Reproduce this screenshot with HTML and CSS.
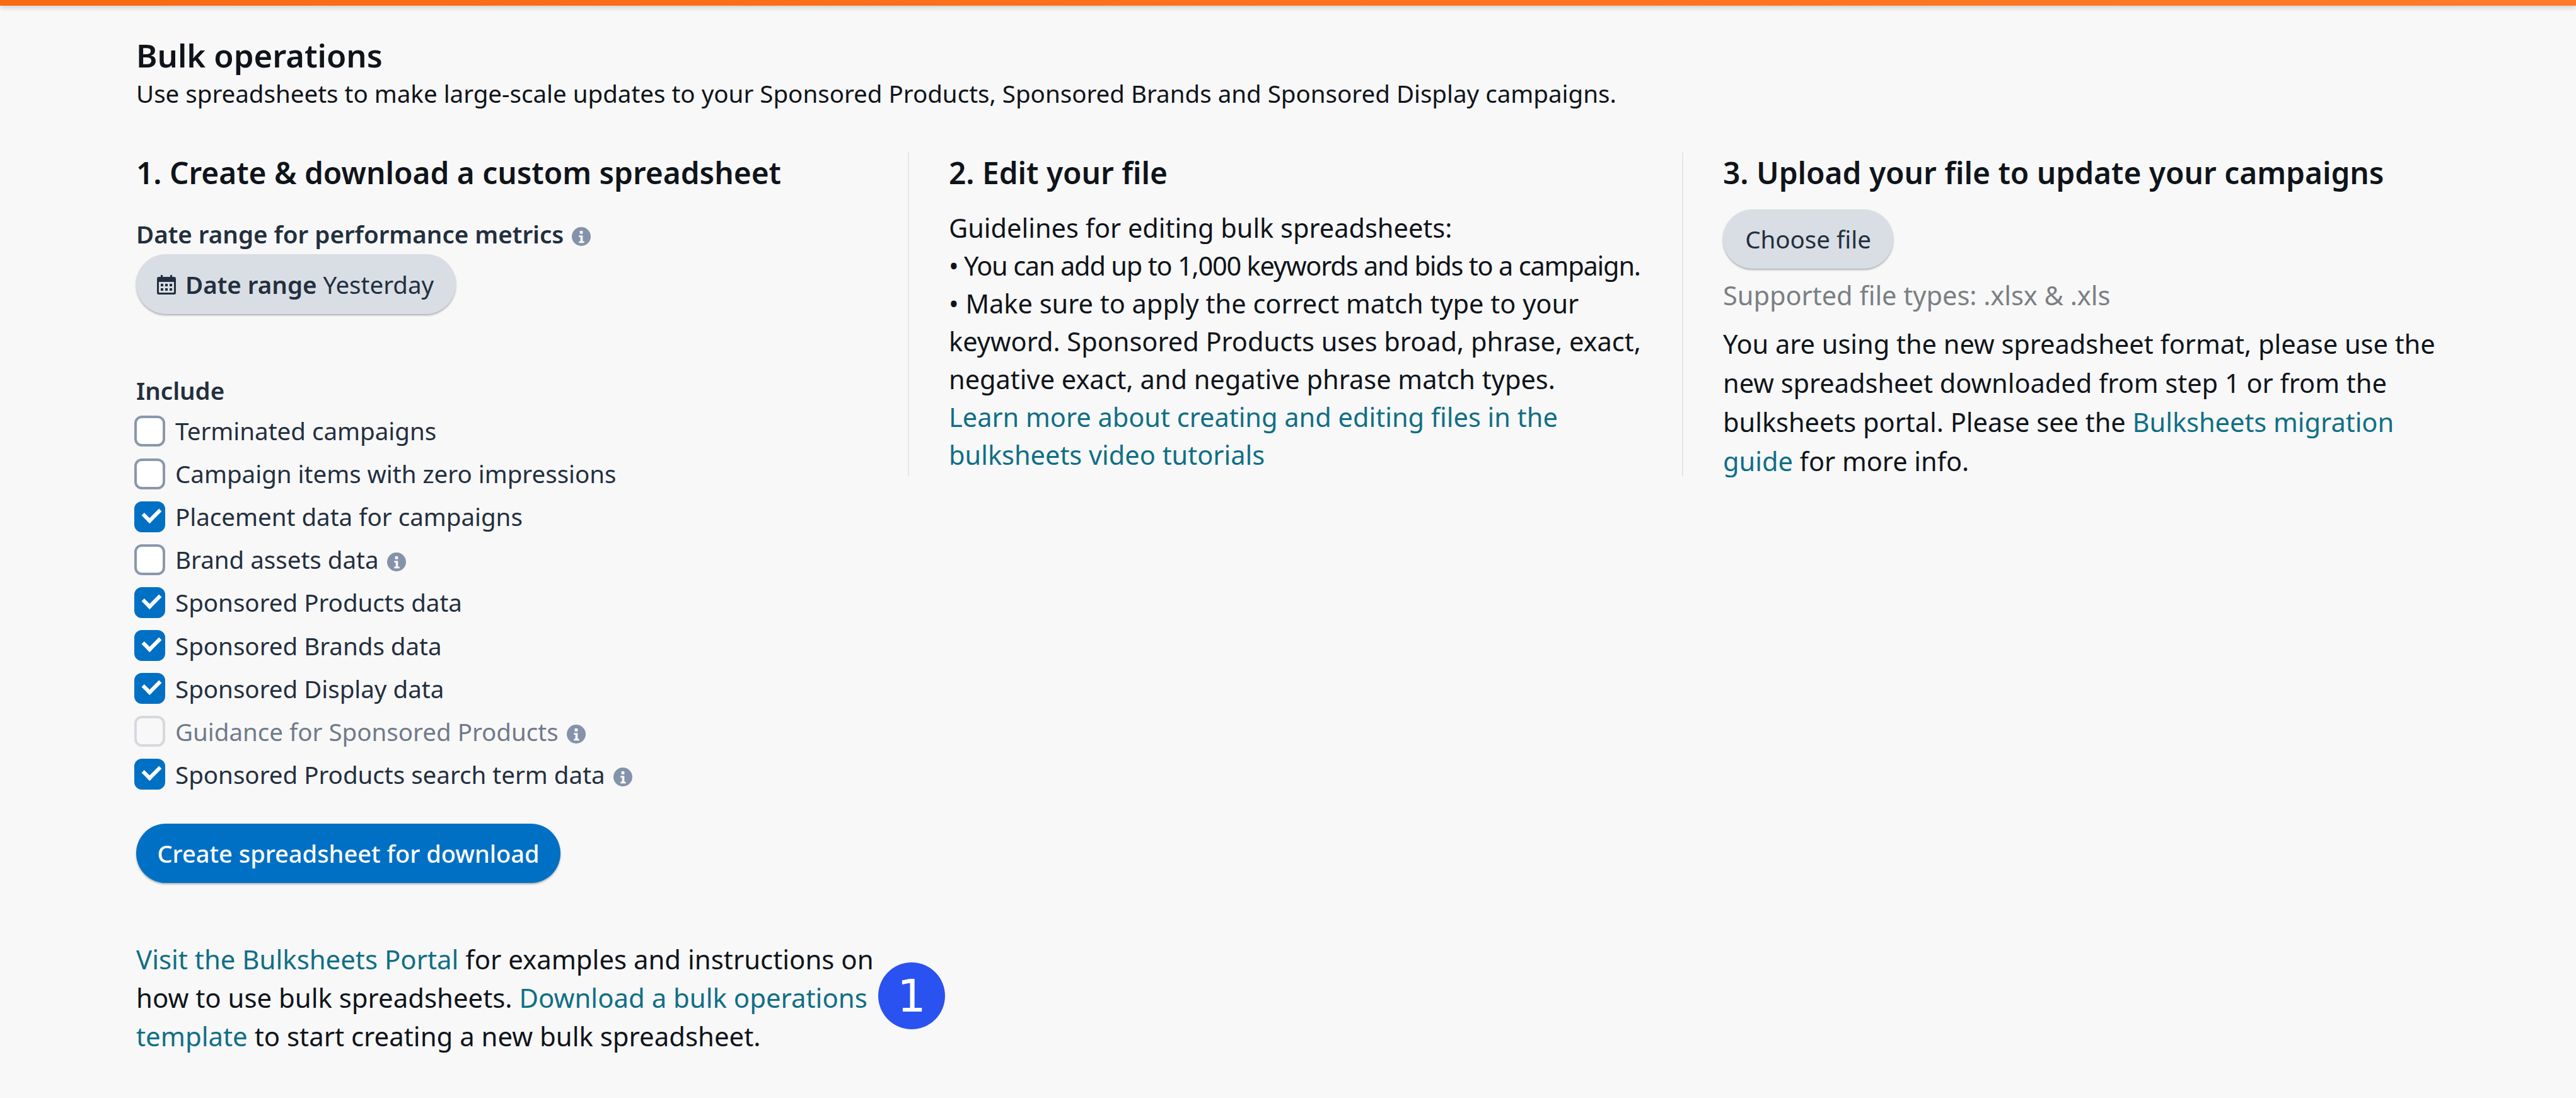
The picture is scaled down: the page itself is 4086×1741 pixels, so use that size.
FILE: index.html
```html
<!doctype html>
<html lang="en">
<head>
  <meta charset="UTF-8">
  <title>Bulk operations</title>
  <link rel="stylesheet" href="styles.css">
</head>
<body>
  <svg class="sprite" aria-hidden="true">
    <symbol id="info" viewBox="0 0 32 32">
      <path fill-rule="evenodd" d="M16 0a16 16 0 1 1 0 32a16 16 0 0 1 0-32zM13.500 6.500h5v5h-5zM12 14h6.500v10H21v3h-9v-3h2.500v-7H12z"/>
    </symbol>
  </svg>
  <div class="top-bar"></div>
  <main class="page">
    <h1>Bulk operations</h1>
    <p class="intro">Use spreadsheets to make large-scale updates to your Sponsored Products, Sponsored Brands and Sponsored Display campaigns.</p>

    <div class="steps">
      <section class="step step-create">
        <h2>1. Create &amp; download a custom spreadsheet</h2>
        <div class="field-label date-label">Date range for performance metrics <svg class="info"><use href="#info"/></svg></div>
        <button type="button" class="btn btn-date">
          <svg class="calendar" viewBox="0 0 32 32">
            <path fill-rule="evenodd" d="M7 1h3v3h12V1h3v3h3a3 3 0 0 1 3 3v22a3 3 0 0 1-3 3H4a3 3 0 0 1-3-3V7a3 3 0 0 1 3-3h3zM4 12v16a1 1 0 0 0 1 1h22a1 1 0 0 0 1-1V12z"/>
            <path d="M7 15h4v4H7zM14 15h4v4h-4zM21 15h4v4h-4zM7 22h4v4H7zM14 22h4v4h-4zM21 22h4v4h-4z"/>
          </svg>
          <span><b>Date range</b> Yesterday</span>
        </button>

        <div class="field-label include-label">Include</div>
        <div class="checks">
          <label class="check"><input type="checkbox"><span>Terminated campaigns</span></label>
          <label class="check"><input type="checkbox"><span>Campaign items with zero impressions</span></label>
          <label class="check"><input type="checkbox" checked><span>Placement data for campaigns</span></label>
          <label class="check"><input type="checkbox"><span>Brand assets data <svg class="info"><use href="#info"/></svg></span></label>
          <label class="check"><input type="checkbox" checked><span>Sponsored Products data</span></label>
          <label class="check"><input type="checkbox" checked><span>Sponsored Brands data</span></label>
          <label class="check"><input type="checkbox" checked><span>Sponsored Display data</span></label>
          <label class="check disabled"><input type="checkbox" disabled><span>Guidance for Sponsored Products <svg class="info"><use href="#info"/></svg></span></label>
          <label class="check"><input type="checkbox" checked><span>Sponsored Products search term data <svg class="info"><use href="#info"/></svg></span></label>
        </div>

        <button type="button" class="btn btn-primary">Create spreadsheet for download</button>

        <p class="portal"><a href="#">Visit the Bulksheets Portal</a> for examples and instructions on<br>how to use bulk spreadsheets. <a href="#">Download a bulk operations<br>template</a> to start creating a new bulk spreadsheet.</p>
        <span class="marker">1</span>
      </section>

      <section class="step step-edit">
        <h2>2. Edit your file</h2>
        <p class="guide">Guidelines for editing bulk spreadsheets:<br>
          <span class="tight">• You can add up to 1,000 keywords and bids to a campaign.</span><br>
          • Make sure to apply the correct match type to your<br>keyword. Sponsored Products uses broad, phrase, exact,<br>negative exact, and negative phrase match types.<br>
          <a href="#">Learn more about creating and editing files in the<br>bulksheets video tutorials</a></p>
      </section>

      <section class="step step-upload">
        <h2>3. Upload your file to update your campaigns</h2>
        <button type="button" class="btn btn-file">Choose file</button>
        <p class="hint">Supported file types: .xlsx &amp; .xls</p>
        <p class="note">You are using the new spreadsheet format, please use the<br>new spreadsheet downloaded from step 1 or from the<br>bulksheets portal. Please see the <a href="#">Bulksheets migration<br>guide</a> for more info.</p>
      </section>
    </div>
  </main>
</body>
</html>
```

FILE: styles.css
```css
:root {
  --text: #0f141a;
  --navy: #232f3e;
  --link: #0f6f86;
  --blue: #0070c4;
  --gray-btn: #d9dee5;
  --line: #e4e6e9;
}

* {
  box-sizing: border-box;
  margin: 0;
  padding: 0;
}

body {
  font-family: "Noto Sans", sans-serif;
  font-size: 38.500px;
  line-height: 60px;
  color: var(--text);
  background: #f8f8f8;
  min-height: 100vh;
}

.sprite {
  display: none;
}

a {
  color: var(--link);
  text-decoration: none;
}

.top-bar {
  height: 9px;
  background: linear-gradient(90deg, #f96a12 0%, #ff7a2a 100%);
  box-shadow: 0 3px 8px rgba(0,0,0,0.18);
}

.page {
  padding: 49px 0 0 216px;
}

h1 {
  font-size: 50.800px;
  line-height: 60px;
  font-weight: 600;
}

.steps {
  display: grid;
  grid-template-columns: 1224px 1228px 1130px;
  margin-top: 64px;
}

h2 {
  font-size: 47.800px;
  line-height: 64px;
  font-weight: 600;
}

.step {
  position: relative;
  padding-left: 63px;
}

.step-create {
  padding-left: 0;
  height: 1435px;
}

.step-edit,
.step-upload {
  height: 513px;
  border-left: 2px solid var(--line);
  font-size: 41.500px;
  white-space: nowrap;
}

.field-label {
  font-weight: 600;
  color: var(--navy);
}

.date-label {
  margin-top: 35px;
}

.info {
  width: 30px;
  height: 30px;
  fill: #8493aa;
  vertical-align: -4px;
  margin-left: 3px;
}

.btn {
  display: block;
  border: none;
  border-radius: 48px;
  font-family: inherit;
  font-size: 38.500px;
  box-shadow: 0 2px 3px rgba(0,0,0,0.3);
}

.btn-date {
  display: flex;
  align-items: center;
  gap: 14px;
  height: 95px;
  width: 507px;
  padding: 0 32px;
  margin-top: 2px;
  background: var(--gray-btn);
  color: var(--navy);
  white-space: nowrap;
}

.btn-date b {
  font-weight: 600;
}

.calendar {
  flex: none;
  width: 32px;
  height: 34px;
  fill: var(--navy);
}

.include-label {
  margin-top: 91px;
}

.checks {
  display: flex;
  flex-direction: column;
}

.check {
  display: flex;
  align-items: center;
  height: 68.100px;
  color: var(--navy);
  white-space: nowrap;
}

.check input {
  appearance: none;
  position: relative;
  flex: none;
  width: 49px;
  height: 49px;
  margin: 0 16px 0 -3px;
  background: #fff;
  border: 4px solid #8a97ab;
  border-radius: 12px;
}

.check input:checked {
  background: var(--blue);
  border-color: var(--blue);
}

.check input:checked::after {
  content: '';
  position: absolute;
  left: 10px;
  top: 6px;
  width: 21px;
  height: 12px;
  border-left: 6px solid #fff;
  border-bottom: 6px solid #fff;
  transform: rotate(-45deg);
}

.check.disabled {
  color: #6f7b8b;
}

.check input:disabled {
  background: #f8f8f8;
  border-color: #d5d9de;
}

.btn-primary {
  margin-top: 44px;
  width: 673px;
  height: 94px;
  background: var(--blue);
  color: #fff;
  font-size: 38px;
  font-weight: 500;
}

.portal {
  margin-top: 90px;
  font-size: 41.900px;
  line-height: 61px;
}

.marker {
  position: absolute;
  right: -59px;
  top: 1284px;
  width: 106px;
  height: 106px;
  border-radius: 50%;
  background: #2a52f0;
  color: #fff;
  font-family: "DejaVu Sans", sans-serif;
  font-size: 72px;
  line-height: 106px;
  text-align: center;
}

.guide {
  margin-top: 25px;
}

.tight {
  letter-spacing: -1.200px;
}

.btn-file {
  margin-top: 26px;
  width: 270px;
  height: 94px;
  background: var(--gray-btn);
  color: var(--navy);
}

.hint {
  margin-top: 12px;
  color: #7a7f85;
}

.note {
  margin-top: 16px;
  line-height: 62px;
}
```
